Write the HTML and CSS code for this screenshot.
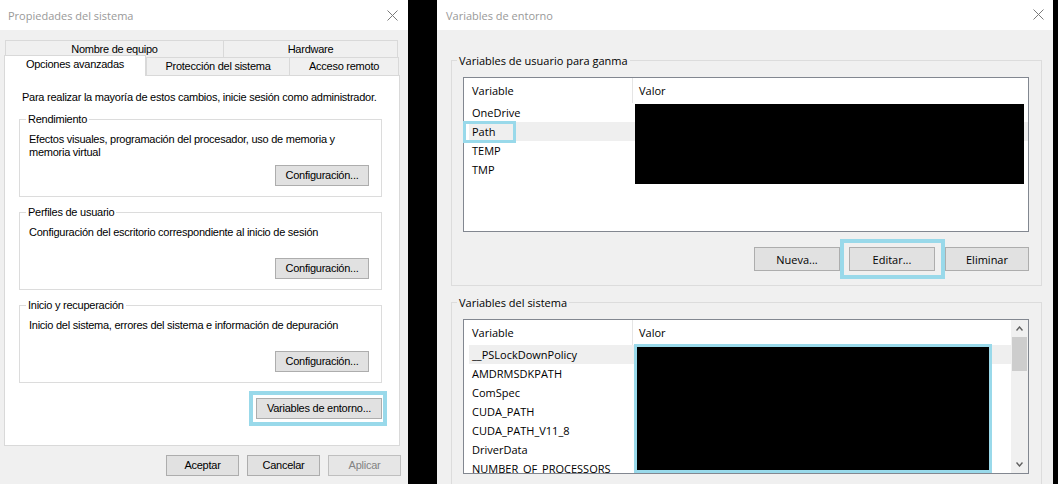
FILE: index.html
```html
<!DOCTYPE html>
<html lang="es">
<head>
<meta charset="utf-8">
<title>Propiedades del sistema</title>
<link rel="stylesheet" href="styles.css">
</head>
<body>
<div class="desktop">
  <section class="win win-left">
    <header class="titlebar titlebar-left">
      <span class="title">Propiedades del sistema</span>
      <svg class="close" width="11" height="11" viewBox="0 0 11 11"><path d="M0.5 0.5L10.5 10.5M10.5 0.5L0.5 10.5" stroke="#7a7a7a" stroke-width="1" fill="none"/></svg>
    </header>
    <div class="body-left">
      <div class="tabs">
        <div class="tabrow row1">
          <div class="tab t-nombre">Nombre de equipo</div>
          <div class="tab t-hw">Hardware</div>
        </div>
        <div class="tabrow row2">
          <div class="tab tab-active t-op">Opciones avanzadas</div>
          <div class="tab t-prot">Protección del sistema</div>
          <div class="tab t-acc">Acceso remoto</div>
        </div>
      </div>
      <div class="panel">
        <p class="intro">Para realizar la mayoría de estos cambios, inicie sesión como administrador.</p>
        <div class="group">
          <div class="group-title">Rendimiento</div>
          <p class="group-text">Efectos visuales, programación del procesador, uso de memoria y<br>memoria virtual</p>
          <button class="btn btn-config">Configuración...</button>
        </div>
        <div class="group">
          <div class="group-title">Perfiles de usuario</div>
          <p class="group-text">Configuración del escritorio correspondiente al inicio de sesión</p>
          <button class="btn btn-config">Configuración...</button>
        </div>
        <div class="group">
          <div class="group-title">Inicio y recuperación</div>
          <p class="group-text">Inicio del sistema, errores del sistema e información de depuración</p>
          <button class="btn btn-config">Configuración...</button>
        </div>
        <div class="env-row">
          <div class="ring ring-env"><button class="btn btn-env">Variables de entorno...</button></div>
        </div>
      </div>
      <div class="dlg-buttons">
        <button class="btn btn-dlg">Aceptar</button>
        <button class="btn btn-dlg">Cancelar</button>
        <button class="btn btn-dlg btn-disabled">Aplicar</button>
      </div>
    </div>
  </section>

  <section class="win win-right">
    <header class="titlebar titlebar-right">
      <span class="title">Variables de entorno</span>
      <svg class="close" width="11" height="11" viewBox="0 0 11 11"><path d="M0.5 0.5L10.5 10.5M10.5 0.5L0.5 10.5" stroke="#7a7a7a" stroke-width="1" fill="none"/></svg>
    </header>
    <div class="body-right">
      <div class="rgroup">
        <div class="rgroup-title">Variables de usuario para ganma</div>
        <div class="lv">
          <div class="lv-main">
            <div class="lv-head"><div class="h1">Variable</div><div class="h2">Valor</div></div>
            <div class="lv-row">OneDrive</div>
            <div class="lv-row sel">Path</div>
            <div class="lv-row">TEMP</div>
            <div class="lv-row">TMP</div>
          </div>
          <div class="redact redact-user"></div>
          <div class="focus-path"></div>
        </div>
        <div class="rbuttons">
          <button class="btn rbtn btn-nueva">Nueva...</button>
          <div class="ring ring-edit"><button class="btn rbtn btn-editar">Editar...</button></div>
          <button class="btn rbtn btn-eliminar">Eliminar</button>
        </div>
      </div>

      <div class="rgroup rgroup-sys">
        <div class="rgroup-title">Variables del sistema</div>
        <div class="lv">
          <div class="lv-main">
            <div class="lv-head"><div class="h1">Variable</div><div class="h2">Valor</div></div>
            <div class="lv-row sel">__PSLockDownPolicy</div>
            <div class="lv-row">AMDRMSDKPATH</div>
            <div class="lv-row">ComSpec</div>
            <div class="lv-row">CUDA_PATH</div>
            <div class="lv-row">CUDA_PATH_V11_8</div>
            <div class="lv-row">DriverData</div>
            <div class="lv-row">NUMBER_OF_PROCESSORS</div>
          </div>
          <div class="sb">
            <div class="sb-btn"><svg width="7" height="5" viewBox="0 0 7 5"><polyline points="0.5,4.5 3.5,1 6.5,4.5" fill="none" stroke="#606060" stroke-width="1.4"/></svg></div>
            <div class="sb-thumb"></div>
            <div class="sb-track"></div>
            <div class="sb-btn"><svg width="7" height="5" viewBox="0 0 7 5"><polyline points="0.5,0.5 3.5,4 6.5,0.5" fill="none" stroke="#606060" stroke-width="1.4"/></svg></div>
          </div>
          <div class="redact redact-sys"></div>
        </div>
      </div>
    </div>
  </section>
</div>
</body>
</html>
```

FILE: styles.css
```css
* { box-sizing: border-box; }

html, body {
  margin: 0;
  padding: 0;
}

body {
  width: 1058px;
  height: 484px;
  overflow: hidden;
  background: #000;
  color: #000;
}

.desktop {
  display: flex;
  height: 484px;
}

.win {
  height: 484px;
  background: #f0f0f0;
  display: flex;
  flex-direction: column;
  overflow: hidden;
}

.win-left {
  width: 408px;
  font: 11px/13px "Liberation Sans", Arial, sans-serif;
  letter-spacing: -0.25px;
}

.win-right {
  width: 616px;
  margin-left: 29px;
  font: 11px/15px "Open Sans", "Noto Sans", sans-serif;
}

.titlebar {
  height: 30px;
  flex: none;
  background: #fff;
  display: flex;
  align-items: center;
  justify-content: space-between;
}

.titlebar-left { padding: 0 10px 0 8px; }
.titlebar-right { padding: 0 9px 0 9px; }

.title {
  font: 11px/15px "Open Sans", "Noto Sans", sans-serif;
  letter-spacing: 0;
  color: #999;
}

.close { display: block; }
.titlebar-right .close { margin-top: -1px; }

/* ---------- left dialog ---------- */

.body-left {
  padding: 10px 8px 0 4px;
}

.tabs { width: 396px; }

.tabrow { display: flex; }

.tab {
  border: 1px solid #d9d9d9;
  border-bottom: 0;
  background: #f0f0f0;
  text-align: center;
  white-space: nowrap;
}

.row1 {
  height: 17px;
  padding-left: 1px;
}

.row1 .tab {
  height: 17px;
  line-height: 16px;
}

.t-nombre { width: 219px; }
.t-hw { width: 175px; margin-left: -1px; }

.row2 {
  height: 19px;
  align-items: flex-end;
}

.row2 .tab {
  height: 18px;
  line-height: 17px;
  margin-bottom: 1px;
}

.row2 .tab-active {
  width: 142px;
  height: 21px;
  line-height: 16px;
  margin-bottom: 0;
  background: #fff;
  position: relative;
  z-index: 1;
}

.t-prot { width: 144px; }
.t-acc { width: 110px; margin-left: -1px; }

.panel {
  margin-top: -1px;
  height: 371px;
  background: #fff;
  border: 1px solid #d9d9d9;
}

.intro {
  margin: 15px 0 0 17px;
  white-space: nowrap;
}

.group {
  margin: 15px 0 0 14px;
  width: 363px;
  height: 78px;
  border: 1px solid #dcdcdc;
  padding: 0 12px 10px 9px;
  display: flex;
  flex-direction: column;
  align-items: flex-start;
}

.group:first-of-type { margin-top: 15px; }

.group-title {
  margin: -7px 0 0 -3px;
  padding: 0 2px;
  background: #fff;
}

.group-text {
  margin: 7px 0 0 0;
  white-space: nowrap;
}

.btn {
  font: inherit;
  letter-spacing: inherit;
  color: #000;
  background: #e1e1e1;
  border: 1px solid #adadad;
  padding: 0;
  margin: 0;
  text-align: center;
  white-space: nowrap;
}

.btn-config {
  width: 94px;
  height: 21px;
  margin-top: auto;
  align-self: flex-end;
}

.env-row {
  display: flex;
  justify-content: flex-end;
  margin: 8px 12px 0 0;
}

.ring {
  border: 4px solid #99d9ea;
}

.ring-env {
  padding: 3px 1px 3px 3px;
}

.btn-env {
  display: block;
  width: 126px;
  height: 21px;
}

.dlg-buttons {
  display: flex;
  justify-content: flex-end;
  gap: 8px;
  margin-top: 9px;
  padding-right: -1px;
  margin-right: -1px;
}

.btn-dlg {
  width: 73px;
  height: 21px;
}

.btn-disabled {
  color: #838383;
  border-color: #bfbfbf;
  background: #e6e6e6;
}

/* ---------- right dialog ---------- */

.body-right {
  padding: 30px 11px 0 14px;
}

.rgroup {
  border: 1px solid #dcdcdc;
  padding: 0 12px 6px 11px;
}

.rgroup-sys {
  margin-top: 16px;
  padding-bottom: 30px;
}

.rgroup-title {
  width: max-content;
  margin: -8px 0 0 -6px;
  padding: 0 2px;
  background: #f0f0f0;
}

.lv {
  position: relative;
  margin-top: 9px;
  width: 566px;
  height: 155px;
  border: 1px solid #828790;
  background: #fff;
  display: flex;
}

.lv-main {
  flex: 1;
  min-width: 0;
  overflow: hidden;
}

.lv-head {
  display: flex;
  height: 25px;
}

.lv-head .h1 {
  width: 169px;
  border-right: 1px solid #e5e5e5;
  padding: 5px 0 0 8px;
}

.lv-head .h2 {
  flex: 1;
  padding: 5px 0 0 6px;
}

.lv-row {
  height: 19px;
  line-height: 19px;
  margin-left: 5px;
  padding-left: 3px;
  white-space: nowrap;
}

.lv-row.sel { background: #efefef; }

.redact {
  position: absolute;
  background: #000;
}

.redact-user {
  left: 171px;
  top: 26px;
  width: 389px;
  height: 80px;
}

.redact-sys {
  left: 170px;
  top: 24px;
  width: 358px;
  height: 129px;
  border: 3px solid #99d9ea;
}

.focus-path {
  position: absolute;
  left: -1px;
  top: 43px;
  width: 53px;
  height: 22px;
  border: 3px solid #99d9ea;
}

.sb {
  width: 17px;
  flex: none;
  background: #f0f0f0;
  display: flex;
  flex-direction: column;
}

.sb-btn {
  height: 17px;
  flex: none;
  display: flex;
  align-items: center;
  justify-content: center;
}

.sb-btn svg { display: block; }

.sb-thumb {
  height: 34px;
  margin: 0 1px;
  background: #cdcdcd;
}

.sb-track { flex: 1; }

.rbuttons {
  display: flex;
  justify-content: flex-end;
  align-items: center;
  margin-top: 7px;
}

.rbtn {
  height: 24px;
}

.btn-nueva { width: 86px; }

.ring-edit {
  padding: 4px 6px 4px 5px;
}

.btn-editar {
  display: block;
  width: 86px;
}

.btn-eliminar { width: 84px; }
```
